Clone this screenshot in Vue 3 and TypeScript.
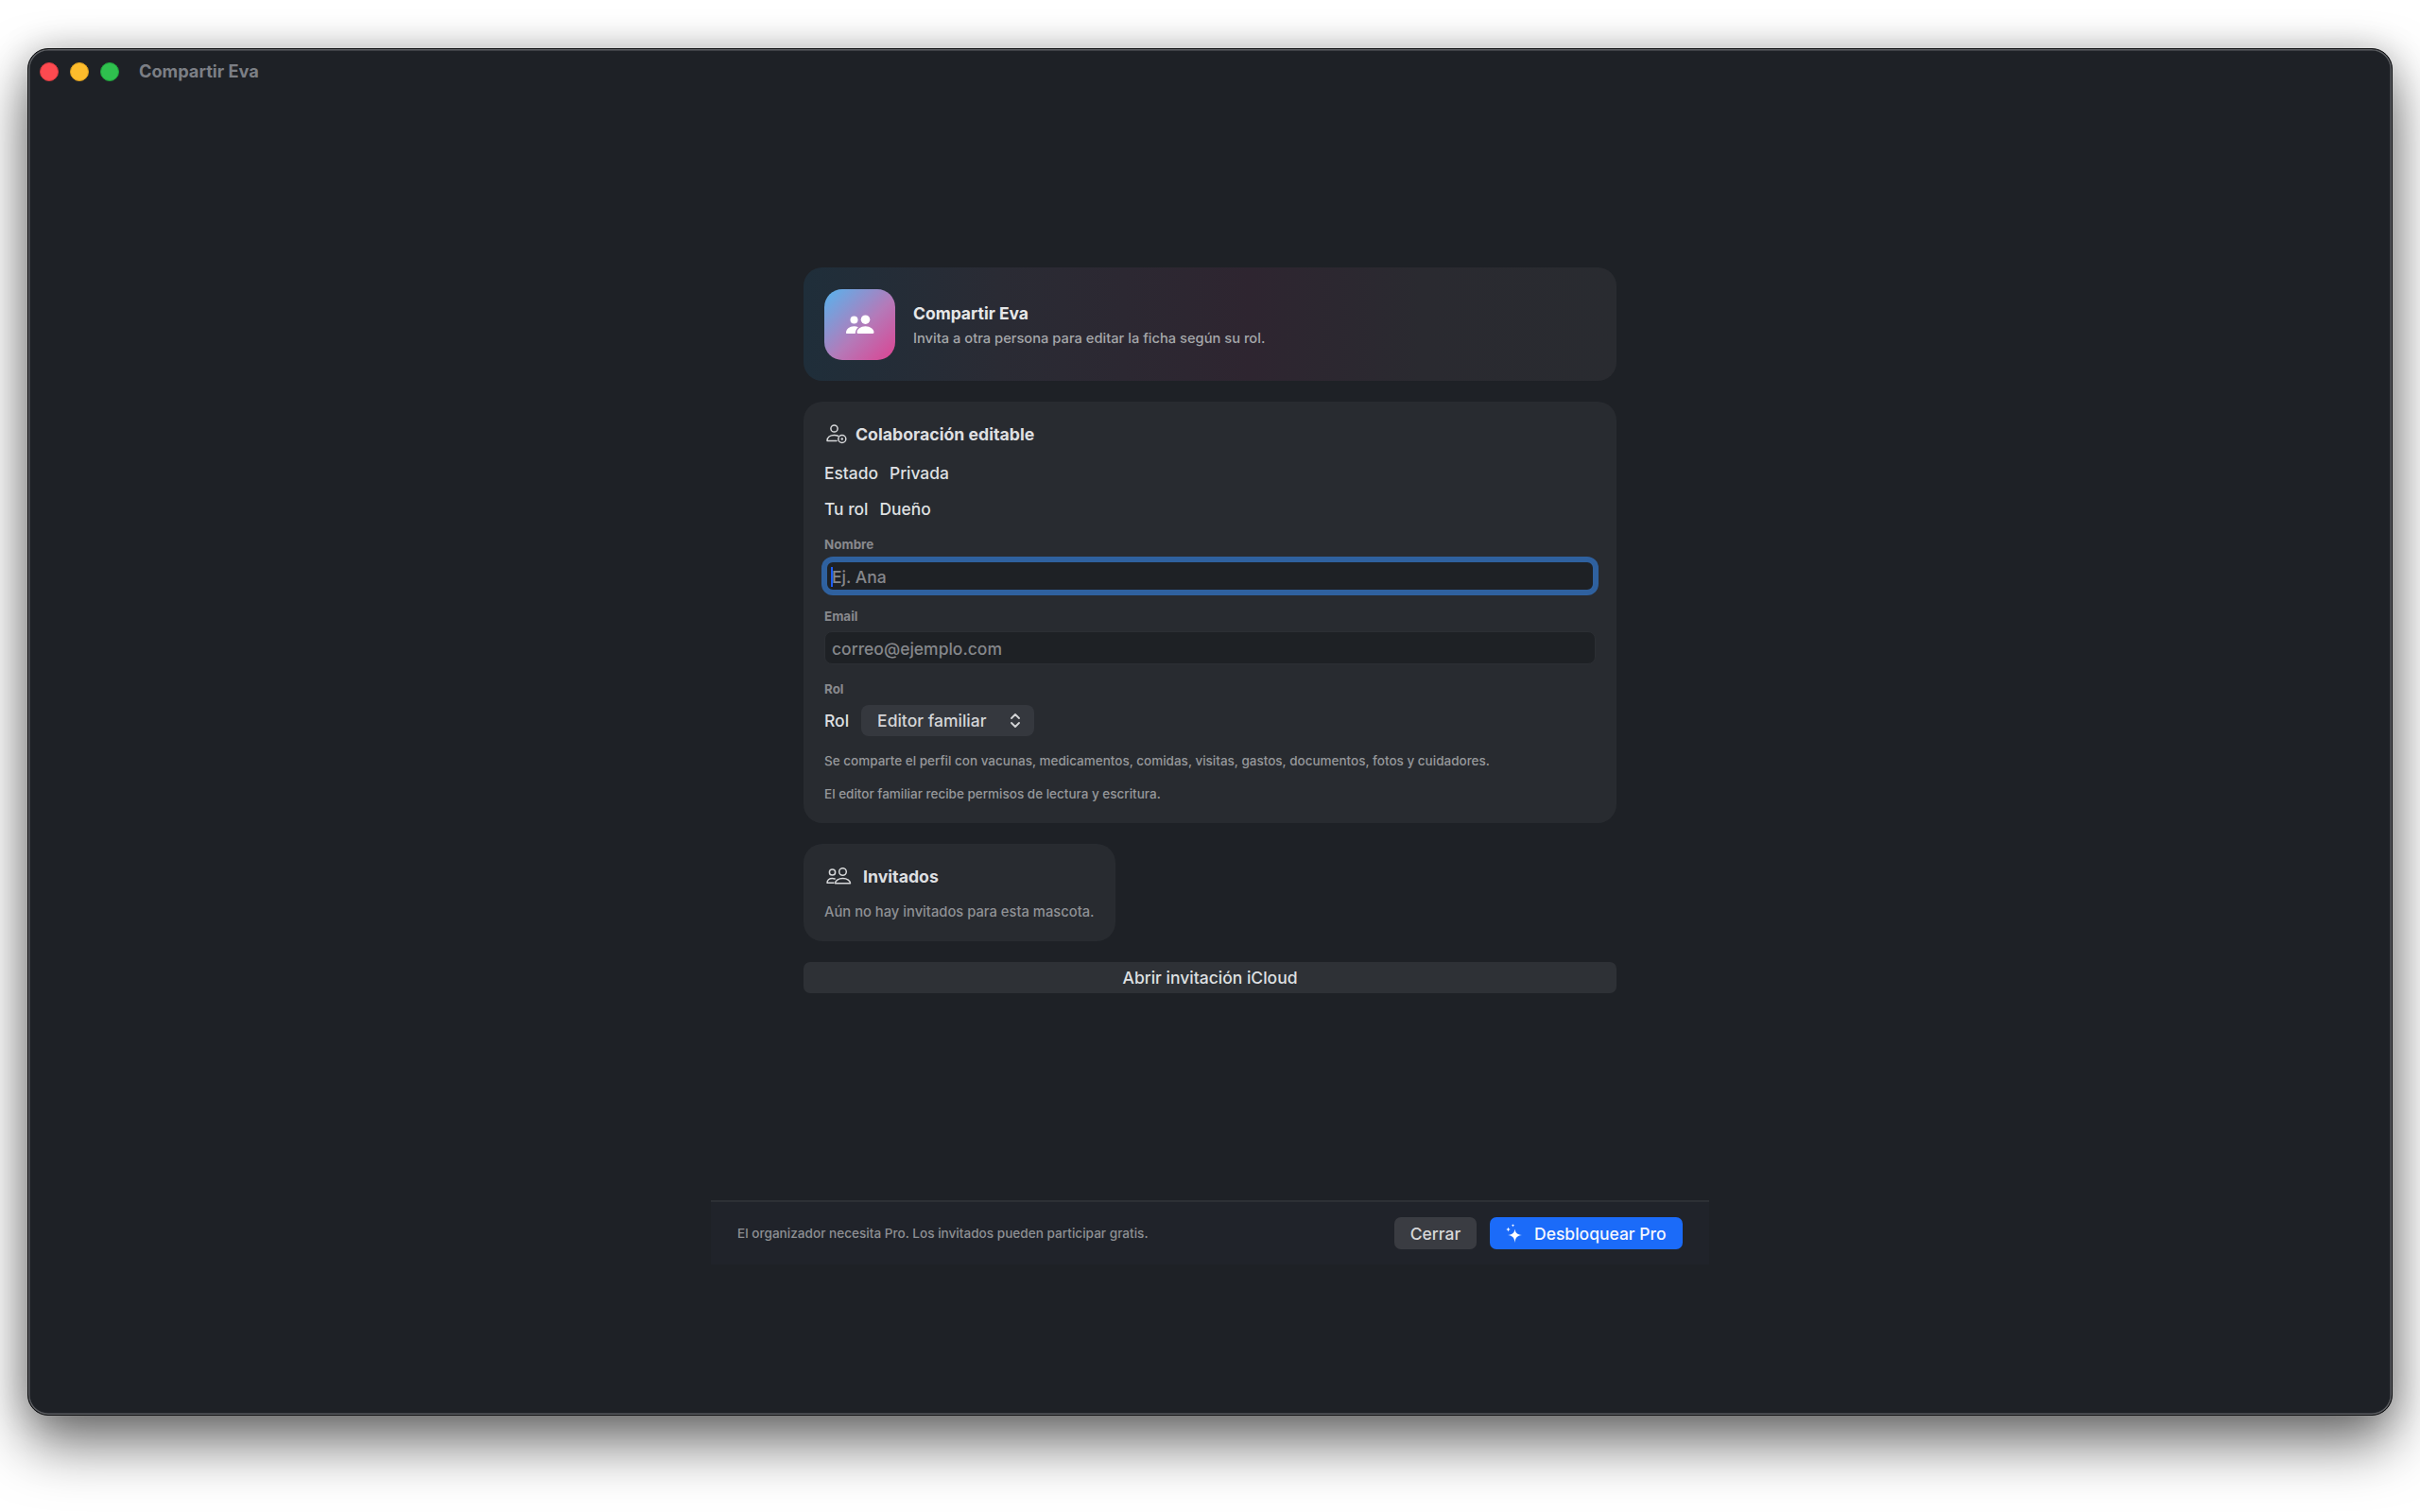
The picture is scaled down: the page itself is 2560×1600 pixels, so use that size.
<script setup lang="ts">
const title: string = 'Compartir Eva'
</script>

<template>
  <div class="page">
    <div class="window">
      <header class="titlebar">
        <div class="lights">
          <span class="light red"></span>
          <span class="light yellow"></span>
          <span class="light green"></span>
        </div>
        <span class="win-title">{{ title }}</span>
      </header>

      <section class="sheet">
        <div class="content">
          <div class="card hero">
            <div class="app-icon">
              <svg width="30" height="21" viewBox="0 0 30 21" fill="#fff">
                <circle cx="8.5" cy="5.5" r="4" />
                <circle cx="20.5" cy="5.2" r="4.8" />
                <path d="M1 20c-.6 0-1-.4-1-1 0-3.600 3.600-6.800 8.500-6.800 1.700 0 3.200.4 4.400 1-1.700 1.500-2.900 3.600-3.200 6.800H1z" />
                <path d="M12.700 20c-.7 0-1.200-.5-1.200-1.200 0-3.500 3.900-6.500 9-6.500s9 3 9 6.500c0 .7-.5 1.200-1.200 1.200H12.700z" />
              </svg>
            </div>
            <div class="hero-text">
              <div class="hero-title">Compartir Eva</div>
              <div class="hero-sub">Invita a otra persona para editar la ficha según su rol.</div>
            </div>
          </div>

          <div class="card form">
            <div class="heading">
              <svg class="ic-collab" width="22" height="21" viewBox="0 0 22 21" fill="none" stroke="#d6d7d9" stroke-width="1.500">
                <circle cx="8.500" cy="4.500" r="3.600" />
                <path d="M1 17.500c0-3.500 3-6 7.500-6 1.500 0 2.900.3 4 .8M1 17.500h10" stroke-linecap="round" />
                <circle cx="16.800" cy="15.500" r="4" />
                <circle cx="16.800" cy="15.500" r="1.200" fill="#d6d7d9" stroke="none" />
              </svg>
              <span class="heading-text">Colaboración editable</span>
            </div>

            <div class="info first"><span>Estado</span><span>Privada</span></div>
            <div class="info second"><span>Tu rol</span><span>Dueño</span></div>

            <label class="field-label name-label">Nombre</label>
            <div class="input-wrap focused">
              <input class="input" type="text" placeholder="Ej. Ana" />
              <span class="caret"></span>
            </div>

            <label class="field-label mail-label">Email</label>
            <div class="input-wrap">
              <input class="input" type="text" placeholder="correo@ejemplo.com" />
            </div>

            <label class="field-label rol-label">Rol</label>
            <div class="rol-row">
              <span class="rol-text">Rol</span>
              <div class="select">
                <span>Editor familiar</span>
                <svg width="12" height="17" viewBox="0 0 12 17" fill="none" stroke="#d4d5d7" stroke-width="1.800" stroke-linecap="round" stroke-linejoin="round">
                  <path d="M2 6l4-4 4 4M2 11l4 4 4-4" />
                </svg>
              </div>
            </div>

            <p class="help help-one">Se comparte el perfil con vacunas, medicamentos, comidas, visitas, gastos, documentos, fotos y cuidadores.</p>
            <p class="help help-two">El editor familiar recibe permisos de lectura y escritura.</p>
          </div>

          <div class="card guests">
            <div class="heading guests-heading">
              <svg width="27" height="18" viewBox="0 0 27 18" fill="none" stroke="#d6d7d9" stroke-width="1.500" stroke-linecap="round" stroke-linejoin="round">
                <circle cx="6.500" cy="5" r="3.100" />
                <circle cx="17.500" cy="4.500" r="3.800" />
                <path d="M1 16.200c0-2.800 2.200-4.700 5.500-4.700 1 0 1.800.2 2.600.5M1 16.200h7" />
                <path d="M9.500 16.800c0-2.900 3.300-5.200 8-5.200s8 2.300 8 5.200z" />
              </svg>
              <span class="heading-text">Invitados</span>
            </div>
            <p class="guests-desc">Aún no hay invitados para esta mascota.</p>
          </div>

          <button class="icloud" type="button">Abrir invitación iCloud</button>
        </div>

        <footer class="footer">
          <span class="footer-note">El organizador necesita Pro. Los invitados pueden participar gratis.</span>
          <div class="actions">
            <button class="btn close" type="button">Cerrar</button>
            <button class="btn pro" type="button">
              <svg width="18" height="21" viewBox="0 0 18 21" fill="#fff">
                <path d="M9.500 5.500c.7 4.300 2.200 5.800 7.500 6.500-5.300.8-6.800 2.300-7.500 8-.7-5.700-2.200-7.200-7.500-8 5.300-.7 6.800-2.200 7.500-6.500z" />
                <path d="M2.500 3.500c.3 1.700.8 2.200 2.500 2.500-1.700.3-2.200.8-2.500 2.500C2.200 6.800 1.700 6.300 0 6c1.700-.3 2.200-.8 2.500-2.500z" />
                <path d="M7.500 0c.2 1.200.6 1.600 1.800 1.800-1.200.2-1.600.6-1.800 1.800-.2-1.200-.6-1.600-1.800-1.800C6.900 1.600 7.300 1.200 7.500 0z" />
              </svg>
              <span>Desbloquear Pro</span>
            </button>
          </div>
        </footer>
      </section>
    </div>
  </div>
</template>

<style>
html, body { margin: 0; background: #fff; }
</style>

<style scoped>
* { box-sizing: border-box; }
.page {
  width: 2560px;
  height: 1600px;
  padding: 51px 29px;
  background: #fff;
  font-family: Inter, "Noto Sans", sans-serif;
  font-weight: 450;
  overflow: hidden;
}
.window {
  height: 1447px;
  background: #1e2126;
  border: 1px solid #0c0d0f;
  border-radius: 22px;
  box-shadow: inset 0 0 0 1.500px #5c5e62, 0 30px 60px rgba(0, 0, 0, 0.55), 0 0 36px rgba(0, 0, 0, 0.2);
  display: flex;
  flex-direction: column;
  align-items: center;
}
.titlebar {
  width: 100%;
  height: 47px;
  padding: 0 0 7px 12px;
  display: flex;
  align-items: flex-end;
}
.lights { display: flex; gap: 12px; height: 33px; align-items: center; }
.light { width: 20px; height: 20px; border-radius: 50%; }
.red { background: #fd4a50; border: 1px solid #d83a40; }
.yellow { background: #fdbc2c; border: 1px solid #dc9e1e; }
.green { background: #2fc04e; border: 1px solid #20a03c; }
.win-title {
  margin-left: 21px;
  height: 33px;
  line-height: 33px;
  font-size: 18.200px;
  font-weight: 700;
  color: #7c7f85;
}
.sheet {
  width: 1056px;
  height: 1055px;
  margin-top: 184px;
  display: flex;
  flex-direction: column;
}
.content {
  width: 860px;
  margin: 0 auto;
  display: flex;
  flex-direction: column;
  gap: 22px;
}
.card { background: #282b30; border-radius: 20px; }
.hero {
  height: 120px;
  padding: 0 22px;
  display: flex;
  align-items: center;
  gap: 19px;
  background: linear-gradient(90deg, #1f2e3a 0%, #2a2b34 24%, #2e2530 55%, #2a2a30 76%, #292b30 100%);
}
.app-icon {
  width: 75px;
  height: 75px;
  border-radius: 19px;
  background: linear-gradient(135deg, #56b4ee 0%, #b47ab9 55%, #dc4391 100%);
  display: flex;
  align-items: center;
  justify-content: center;
}
.hero-text { margin-top: -1px; }
.hero-title {
  font-size: 17.500px;
  line-height: 24px;
  font-weight: 650;
  color: #e6e7e8;
}
.hero-sub {
  margin-top: 6px;
  font-size: 14.700px;
  line-height: 16px;
  color: #a5a7aa;
}
.form { padding: 22px 22px 23px; display: flex; flex-direction: column; }
.heading { display: flex; align-items: center; height: 24px; gap: 9px; }
.heading-text { font-size: 17.700px; font-weight: 650; color: #dedfe1; }
.ic-collab { margin-left: 2px; }
.info { display: flex; gap: 12px; height: 24px; line-height: 24px; font-size: 17.400px; color: #dfe0e2; }
.first { margin-top: 18px; }
.second { margin-top: 14px; }
.field-label {
  height: 16px;
  line-height: 16px;
  font-size: 13.400px;
  font-weight: 650;
  color: #88898d;
}
.name-label { margin-top: 17px; }
.mail-label { margin-top: 17px; }
.rol-label { margin-top: 18px; }
.input-wrap { position: relative; margin-top: 8px; height: 35px; }
.input {
  display: block;
  width: 100%;
  height: 35px;
  padding: 1px 7px 0;
  background: #1e2125;
  border: 1px solid #2c2f34;
  border-radius: 8px;
  outline: none;
  font-family: inherit;
  font-weight: inherit;
  font-size: 17.500px;
  color: #dfe0e2;
}
.input::placeholder { color: #85878b; opacity: 1; }
.focused .input { padding: 1px 5px 0; box-shadow: 0 0 0 3px #2f619f; border: 3px solid #2f619f; border-radius: 9px; }
.caret {
  position: absolute;
  left: 7px;
  top: 8px;
  width: 2px;
  height: 21px;
  background: #1f5df2;
}
.rol-row { margin-top: 9px; display: flex; align-items: center; gap: 13px; height: 33px; }
.rol-text { font-size: 17.500px; color: #dfe0e2; }
.select {
  width: 183px;
  height: 33px;
  padding: 0 14px 0 17px;
  background: #35383e;
  border-radius: 8px;
  display: flex;
  align-items: center;
  justify-content: space-between;
  font-size: 17.500px;
  color: #d4d5d7;
}
.help { margin: 0; height: 16px; line-height: 16px; font-size: 13.500px; color: #96989b; white-space: nowrap; }
.help-one { margin-top: 18px; }
.help-two { margin-top: 19px; }
.guests { width: 330px; height: 103px; padding: 22px; }
.guests-heading { gap: 12px; padding-left: 2px; }
.guests-desc { margin: 16px 0 0; height: 20px; line-height: 20px; font-size: 14.750px; color: #8f9195; white-space: nowrap; }
.icloud {
  height: 33px;
  padding: 0;
  background: #2e3136;
  border: none;
  border-radius: 7px;
  font-family: inherit;
  font-size: 17.500px;
  font-weight: 500;
  color: #dfe0e2;
}
.footer {
  margin-top: auto;
  height: 68px;
  padding: 0 28px;
  background: #20232a;
  border-top: 2px solid #2d3035;
  display: flex;
  align-items: center;
  justify-content: space-between;
}
.footer-note { font-size: 13.600px; color: #8d8f93; }
.actions { display: flex; gap: 14px; }
.btn {
  height: 34px;
  border: none;
  border-radius: 7px;
  font-family: inherit;
  font-size: 17.500px;
  font-weight: 500;
}
.close { width: 87px; padding: 0; background: #3a3c42; color: #d6d7d9; }
.pro {
  width: 204px;
  padding: 0 0 0 17px;
  background: #1b6bf9;
  color: #f4f7fe;
  display: flex;
  align-items: center;
  gap: 12px;
}
</style>
